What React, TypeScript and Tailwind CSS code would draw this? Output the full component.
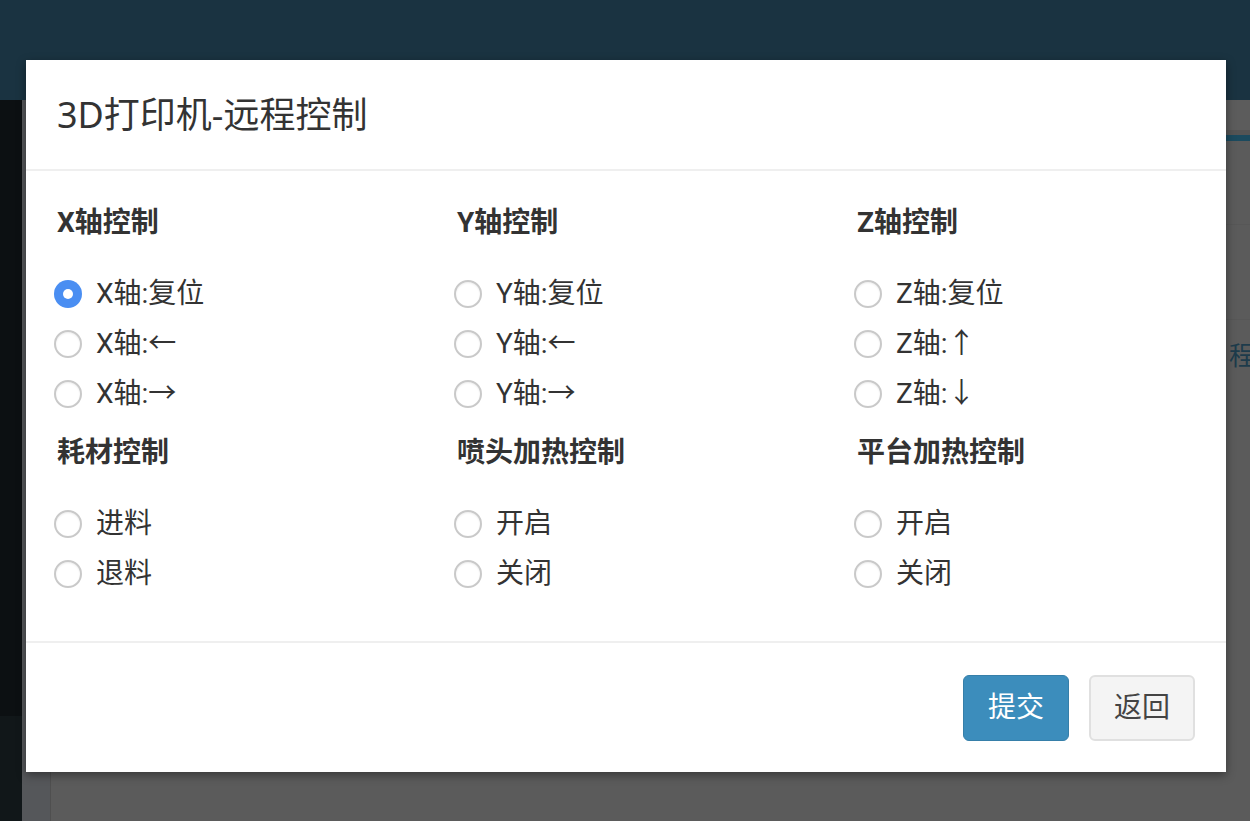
import React from "react";

const font = { fontFamily: 'Roboto, "Noto Sans CJK SC", sans-serif' };

type Group = { title: string; options: string[] };

const topGroups: Group[] = [
  { title: "X轴控制", options: ["X轴:复位", "X轴:←", "X轴:→"] },
  { title: "Y轴控制", options: ["Y轴:复位", "Y轴:←", "Y轴:→"] },
  { title: "Z轴控制", options: ["Z轴:复位", "Z轴:↑", "Z轴:↓"] },
];

const bottomGroups: Group[] = [
  { title: "耗材控制", options: ["进料", "退料"] },
  { title: "喷头加热控制", options: ["开启", "关闭"] },
  { title: "平台加热控制", options: ["开启", "关闭"] },
];

function Radio({ checked }: { checked?: boolean }) {
  if (checked) {
    return (
      <span className="w-[28px] h-[28px] rounded-full bg-[#4a8ef2] flex items-center justify-center shrink-0">
        <span className="w-[10px] h-[10px] rounded-full bg-white" />
      </span>
    );
  }
  return (
    <span className="w-[28px] h-[28px] rounded-full bg-white border-2 border-[#c9c9c9] shadow-[inset_0_1px_2px_rgba(0,0,0,0.08)] shrink-0" />
  );
}

function GroupCol({ group, checkedFirst }: { group: Group; checkedFirst?: boolean }) {
  return (
    <div className="pl-[28px]">
      <div className="h-[40px] leading-[40px] pl-[3px] text-[28px] font-bold text-[#333]">{group.title}</div>
      <div className="mt-[26px]">
        {group.options.map((o, i) => (
          <label key={o} className="h-[50px] flex items-center gap-[14px] text-[28px] text-[#333]">
            <Radio checked={checkedFirst && i === 0} />
            <span>{o}</span>
          </label>
        ))}
      </div>
    </div>
  );
}

export default function App() {
  return (
    <div className="relative w-[1250px] h-[821px] overflow-hidden bg-[#5b5b5b]" style={font}>
      {/* page behind the dark overlay */}
      <div className="h-[100px] bg-[#1a3341]" />
      <div className="flex h-[721px]">
        <div className="w-[22px] flex flex-col">
          <div className="h-[616px] bg-[#0c1012]" />
          <div className="flex-1 bg-[#111719]" />
        </div>
        <div className="flex-1 flex">
          <div className="w-[29px] bg-[#55575a] border-r border-[#4f4f4f]" />
          <div className="flex-1 flex flex-col">
            <div className="h-[30px] bg-[#5c5c5c]" />
            <div className="h-[5px] bg-[#545454]" />
            <div className="h-[6px] bg-[#1b4a5e]" />
            <div className="h-[84px] border-b border-[#575757]" />
            <div className="h-[95px] border-b border-[#575757]" />
            <div className="flex justify-end overflow-hidden mt-[18px]">
              <span className="text-[26px] leading-[36px] text-[#1d3b4b] mr-[-5px]">程</span>
            </div>
          </div>
        </div>
      </div>

      {/* modal */}
      <div className="absolute left-[26px] top-[60px] w-[1200px] bg-white shadow-[0_3px_9px_rgba(0,0,0,0.4)]">
        <div className="h-[111px] flex items-center px-[31px] border-b-2 border-[#efefef]">
          <h4 className="text-[36px] text-[#333] leading-none" style={{ fontFamily: '"Noto Sans", "Noto Sans CJK SC", sans-serif' }}>
            3D打印机-远程控制
          </h4>
        </div>
        <div className="pt-[32px] pb-[42px]">
          <div className="grid grid-cols-3">
            {topGroups.map((g, i) => (
              <GroupCol key={g.title} group={g} checkedFirst={i === 0} />
            ))}
          </div>
          <div className="grid grid-cols-3 mt-[14px]">
            {bottomGroups.map((g) => (
              <GroupCol key={g.title} group={g} />
            ))}
          </div>
        </div>
        <div className="border-t-2 border-[#efefef] flex justify-end gap-[20px] pt-[32px] pb-[31px] pr-[31px]">
          <button className="w-[106px] h-[66px] rounded-[6px] bg-[#3c8dbc] border border-[#367fa9] text-white text-[28px]">
            提交
          </button>
          <button className="w-[106px] h-[66px] rounded-[6px] bg-[#f4f4f4] border-2 border-[#e0e0e0] text-[#444] text-[28px]">
            返回
          </button>
        </div>
      </div>
    </div>
  );
}
